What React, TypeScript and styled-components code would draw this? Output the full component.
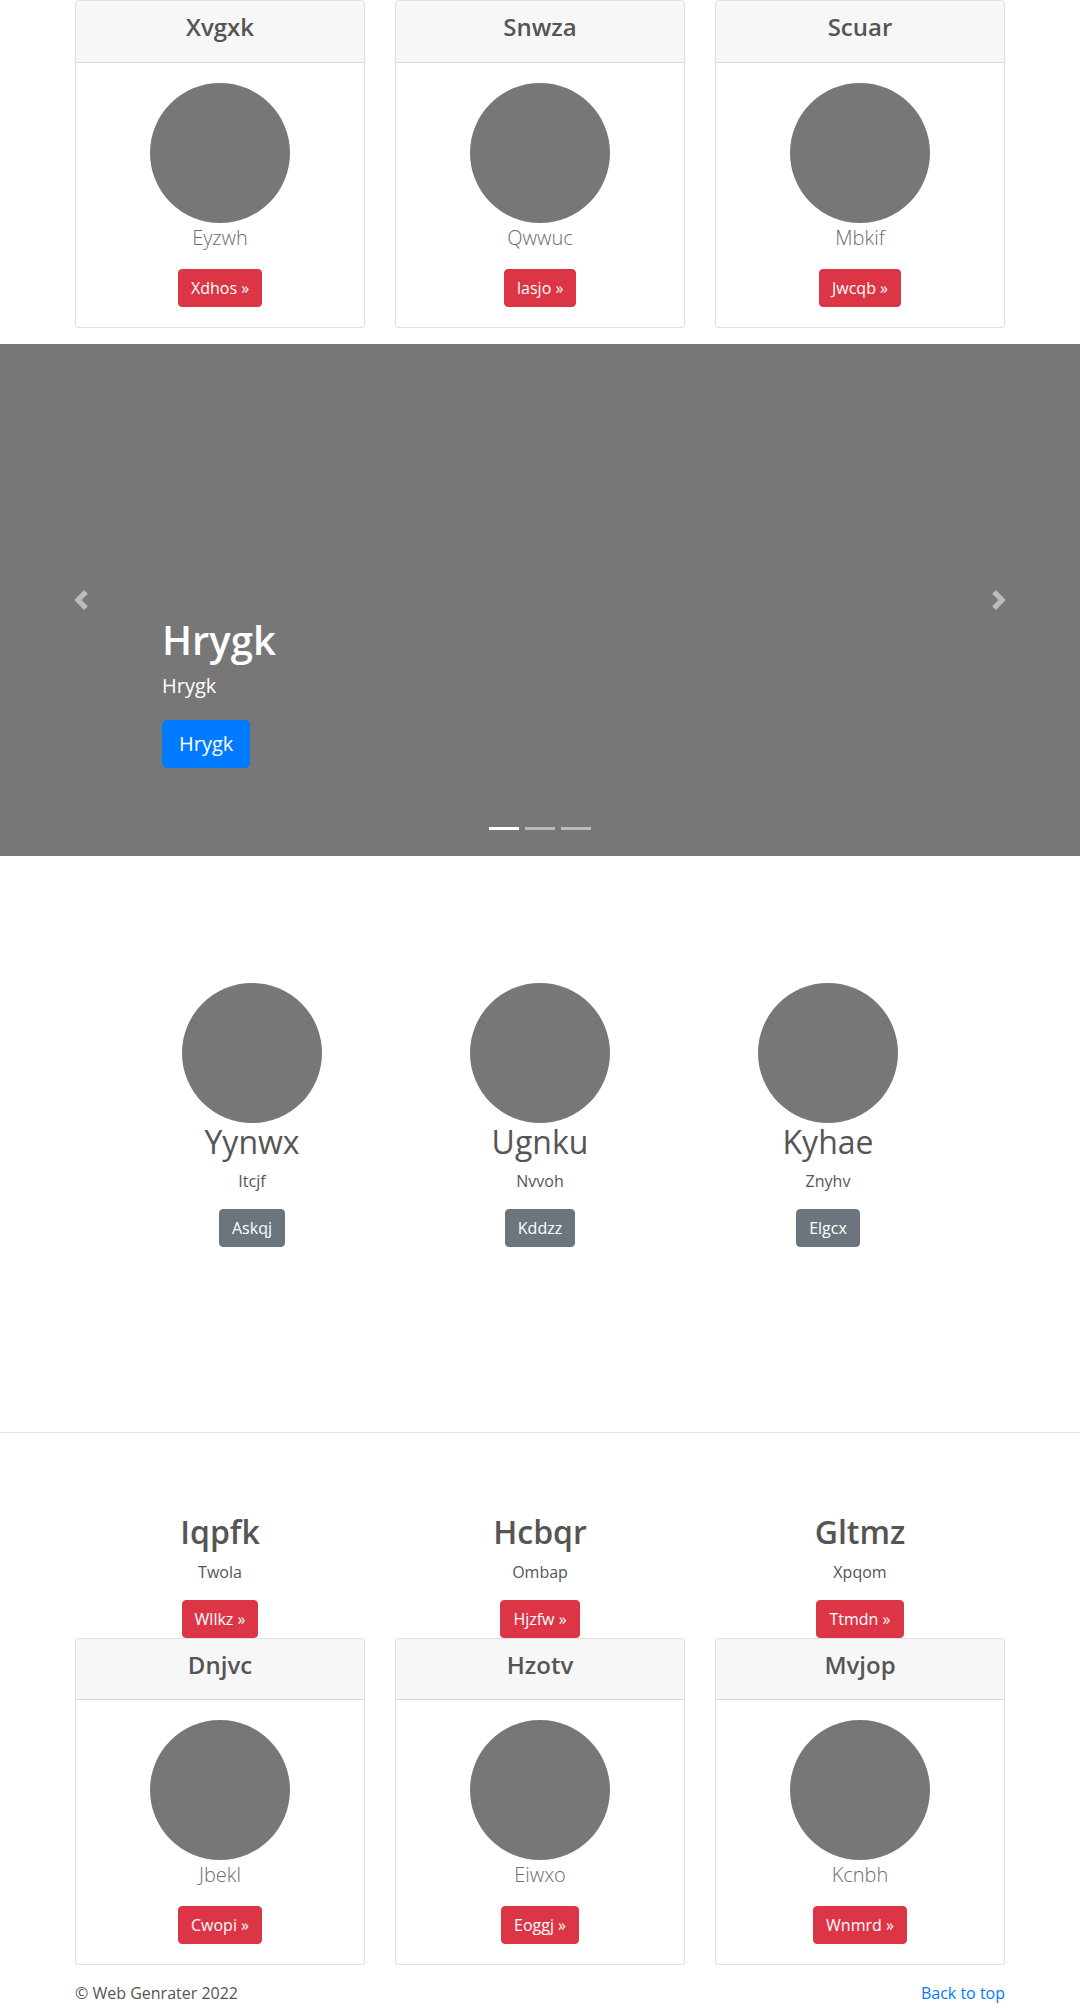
import React from "react";
import styled, { createGlobalStyle } from "styled-components";

const GlobalStyle = createGlobalStyle`
  * { box-sizing: border-box; }
  html, body { margin: 0; padding: 0; }
  body {
    font-family: "Open Sans", "Noto Sans", "Liberation Sans", sans-serif;
    font-size: 16px;
    line-height: 1.5;
    color: #555;
    background: #fff;
  }
`;

const Container = styled.div`
  max-width: 960px;
  margin: 0 auto;
  padding: 0 15px;
`;

const CardGrid = styled.div`
  display: grid;
  grid-template-columns: repeat(3, 1fr);
  column-gap: 30px;
`;

const Card = styled.div`
  border: 1px solid rgba(0, 0, 0, 0.125);
  border-radius: 4px;
  margin-bottom: 16px;
  text-align: center;
  background: #fff;
  overflow: hidden;
`;

const CardHeader = styled.div`
  background: #f7f7f7;
  border-bottom: 1px solid rgba(0, 0, 0, 0.125);
  padding: 12px 20px;
`;

const CardTitle = styled.h4`
  margin: 0 0 8px;
  font-size: 24px;
  font-weight: 600;
  line-height: 1.2;
  color: #555;
`;

const CardBody = styled.div`
  padding: 20px;
`;

const Avatar = styled.svg`
  display: block;
  margin: 0 auto;
`;

const Lead = styled.p`
  margin: 0 0 16px;
  font-size: 20px;
  font-weight: 300;
  line-height: 1.5;
  color: #6c6c6c;
`;

const Btn = styled.a<{ $variant: "danger" | "secondary" | "primary"; $large?: boolean }>`
  display: inline-block;
  font-size: ${(p) => (p.$large ? "20px" : "16px")};
  line-height: 1.5;
  padding: ${(p) => (p.$large ? "8px 16px" : "6px 12px")};
  border-radius: ${(p) => (p.$large ? "4.8px" : "4px")};
  border: 1px solid
    ${(p) => (p.$variant === "danger" ? "#dc3545" : p.$variant === "primary" ? "#007bff" : "#6c757d")};
  background: ${(p) => (p.$variant === "danger" ? "#dc3545" : p.$variant === "primary" ? "#007bff" : "#6c757d")};
  color: #fff;
  text-decoration: none;
  font-weight: 400;
  cursor: pointer;
`;

const Carousel = styled.section`
  position: relative;
  height: 512px;
  background: #777;
  overflow: hidden;
`;

const Control = styled.a<{ $side: "left" | "right" }>`
  position: absolute;
  top: 0;
  bottom: 0;
  ${(p) => (p.$side === "left" ? "left: 0;" : "right: 0;")}
  width: 15%;
  display: flex;
  align-items: center;
  justify-content: center;
  opacity: 0.5;
`;

const Caption = styled.div`
  position: absolute;
  left: 15%;
  right: 15%;
  bottom: 48px;
  padding: 20px 0;
  color: #fff;
  text-align: left;
  z-index: 2;
`;

const CaptionTitle = styled.h1`
  margin: 0 0 8px;
  font-size: 40px;
  font-weight: 600;
  line-height: 1.2;
`;

const CaptionText = styled.p`
  margin: 0 0 20px;
  font-size: 20px;
  line-height: 1.4;
`;

const CaptionAction = styled.div`
  display: flex;
  margin-bottom: 20px;
`;

const Indicators = styled.ol`
  position: absolute;
  left: 0;
  right: 0;
  bottom: 0;
  margin: 0 0 16px;
  padding: 0;
  list-style: none;
  display: flex;
  justify-content: center;
`;

const Indicator = styled.li<{ $active?: boolean }>`
  box-sizing: content-box;
  width: 30px;
  height: 3px;
  margin: 0 3px;
  background: #fff;
  background-clip: padding-box;
  border-top: 10px solid transparent;
  border-bottom: 10px solid transparent;
  opacity: ${(p) => (p.$active ? 1 : 0.5)};
`;

const MarketingSection = styled.section`
  padding: 127px 0 169px;
`;

const MarketingGrid = styled.div`
  width: 864px;
  margin: 0 auto;
  display: grid;
  grid-template-columns: repeat(3, 1fr);
`;

const MarketingCol = styled.div`
  text-align: center;
`;

const MarketingName = styled.h2`
  margin: 0 0 8px;
  font-size: 32px;
  font-weight: 400;
  line-height: 1.2;
  color: #555;
`;

const Para = styled.p`
  margin: 0 0 16px;
  font-size: 16px;
  line-height: 1.5;
`;

const ActionRow = styled.div<{ $gap?: number }>`
  display: flex;
  justify-content: center;
  margin-bottom: ${(p) => p.$gap ?? 0}px;
`;

const Divider = styled.hr`
  margin: 0;
  border: 0;
  border-top: 1px solid rgba(0, 0, 0, 0.1);
`;

const FeatureSection = styled.section`
  padding-top: 80px;
`;

const FeatureCol = styled.div`
  text-align: center;
`;

const FeatureTitle = styled.h2`
  margin: 0 0 8px;
  font-size: 32px;
  font-weight: 600;
  line-height: 1.2;
  color: #555;
`;

const Footer = styled.footer`
  display: flex;
  justify-content: space-between;
  align-items: flex-start;
`;

const FooterText = styled.p`
  margin: 0 0 16px;
  font-size: 16px;
  line-height: 1.5;
  color: #555;
`;

const FooterLink = styled.a`
  color: #007bff;
  text-decoration: none;
`;

const Circle = ({ size = 140 }: { size?: number }) => (
  <Avatar width={size} height={size} viewBox="0 0 140 140" aria-hidden="true">
    <circle cx="70" cy="70" r="70" fill="#777" />
  </Avatar>
);

const Chevron = ({ dir }: { dir: "left" | "right" }) => (
  <svg width="20" height="20" viewBox="0 0 8 8" fill="#fff" aria-hidden="true">
    <path
      d={
        dir === "left"
          ? "M5.25 0l-4 4 4 4 1.5-1.5L4.25 4l2.5-2.5L5.25 0z"
          : "M2.75 0l-1.5 1.5L3.75 4l-2.5 2.5L2.75 8l4-4-4-4z"
      }
    />
  </svg>
);

type CardData = { title: string; text: string; btn: string };

const topCards: CardData[] = [
  { title: "Xvgxk", text: "Eyzwh", btn: "Xdhos" },
  { title: "Snwza", text: "Qwwuc", btn: "Iasjo" },
  { title: "Scuar", text: "Mbkif", btn: "Jwcqb" },
];

const bottomCards: CardData[] = [
  { title: "Dnjvc", text: "Jbekl", btn: "Cwopi" },
  { title: "Hzotv", text: "Eiwxo", btn: "Eoggj" },
  { title: "Mvjop", text: "Kcnbh", btn: "Wnmrd" },
];

const marketing = [
  { name: "Yynwx", sub: "Itcjf", btn: "Askqj" },
  { name: "Ugnku", sub: "Nvvoh", btn: "Kddzz" },
  { name: "Kyhae", sub: "Znyhv", btn: "Elgcx" },
];

const features = [
  { title: "Iqpfk", sub: "Twola", btn: "Wllkz" },
  { title: "Hcbqr", sub: "Ombap", btn: "Hjzfw" },
  { title: "Gltmz", sub: "Xpqom", btn: "Ttmdn" },
];

const CardRow = ({ items }: { items: CardData[] }) => (
  <CardGrid>
    {items.map((c) => (
      <Card key={c.title}>
        <CardHeader>
          <CardTitle>{c.title}</CardTitle>
        </CardHeader>
        <CardBody>
          <Circle />
          <Lead>{c.text}</Lead>
          <Btn $variant="danger" href="#">
            {c.btn} &raquo;
          </Btn>
        </CardBody>
      </Card>
    ))}
  </CardGrid>
);

export default function App() {
  return (
    <>
      <GlobalStyle />
      <Container>
        <CardRow items={topCards} />
      </Container>

      <Carousel>
        <Control $side="left" href="#">
          <Chevron dir="left" />
        </Control>
        <Control $side="right" href="#">
          <Chevron dir="right" />
        </Control>
        <Caption>
          <CaptionTitle>Hrygk</CaptionTitle>
          <CaptionText>Hrygk</CaptionText>
          <CaptionAction>
            <Btn $variant="primary" $large href="#">
              Hrygk
            </Btn>
          </CaptionAction>
        </Caption>
        <Indicators>
          <Indicator $active />
          <Indicator />
          <Indicator />
        </Indicators>
      </Carousel>

      <MarketingSection>
        <MarketingGrid>
          {marketing.map((m) => (
            <MarketingCol key={m.name}>
              <Circle />
              <MarketingName>{m.name}</MarketingName>
              <Para>{m.sub}</Para>
              <ActionRow $gap={16}>
                <Btn $variant="secondary" href="#">
                  {m.btn}
                </Btn>
              </ActionRow>
            </MarketingCol>
          ))}
        </MarketingGrid>
      </MarketingSection>

      <Divider />

      <FeatureSection>
        <Container>
          <CardGrid>
            {features.map((f) => (
              <FeatureCol key={f.title}>
                <FeatureTitle>{f.title}</FeatureTitle>
                <Para>{f.sub}</Para>
                <ActionRow>
                  <Btn $variant="danger" href="#">
                    {f.btn} &raquo;
                  </Btn>
                </ActionRow>
              </FeatureCol>
            ))}
          </CardGrid>
          <CardRow items={bottomCards} />
        </Container>
      </FeatureSection>

      <Container>
        <Footer>
          <FooterText>&copy; Web Genrater 2022</FooterText>
          <FooterText>
            <FooterLink href="#">Back to top</FooterLink>
          </FooterText>
        </Footer>
      </Container>
    </>
  );
}
